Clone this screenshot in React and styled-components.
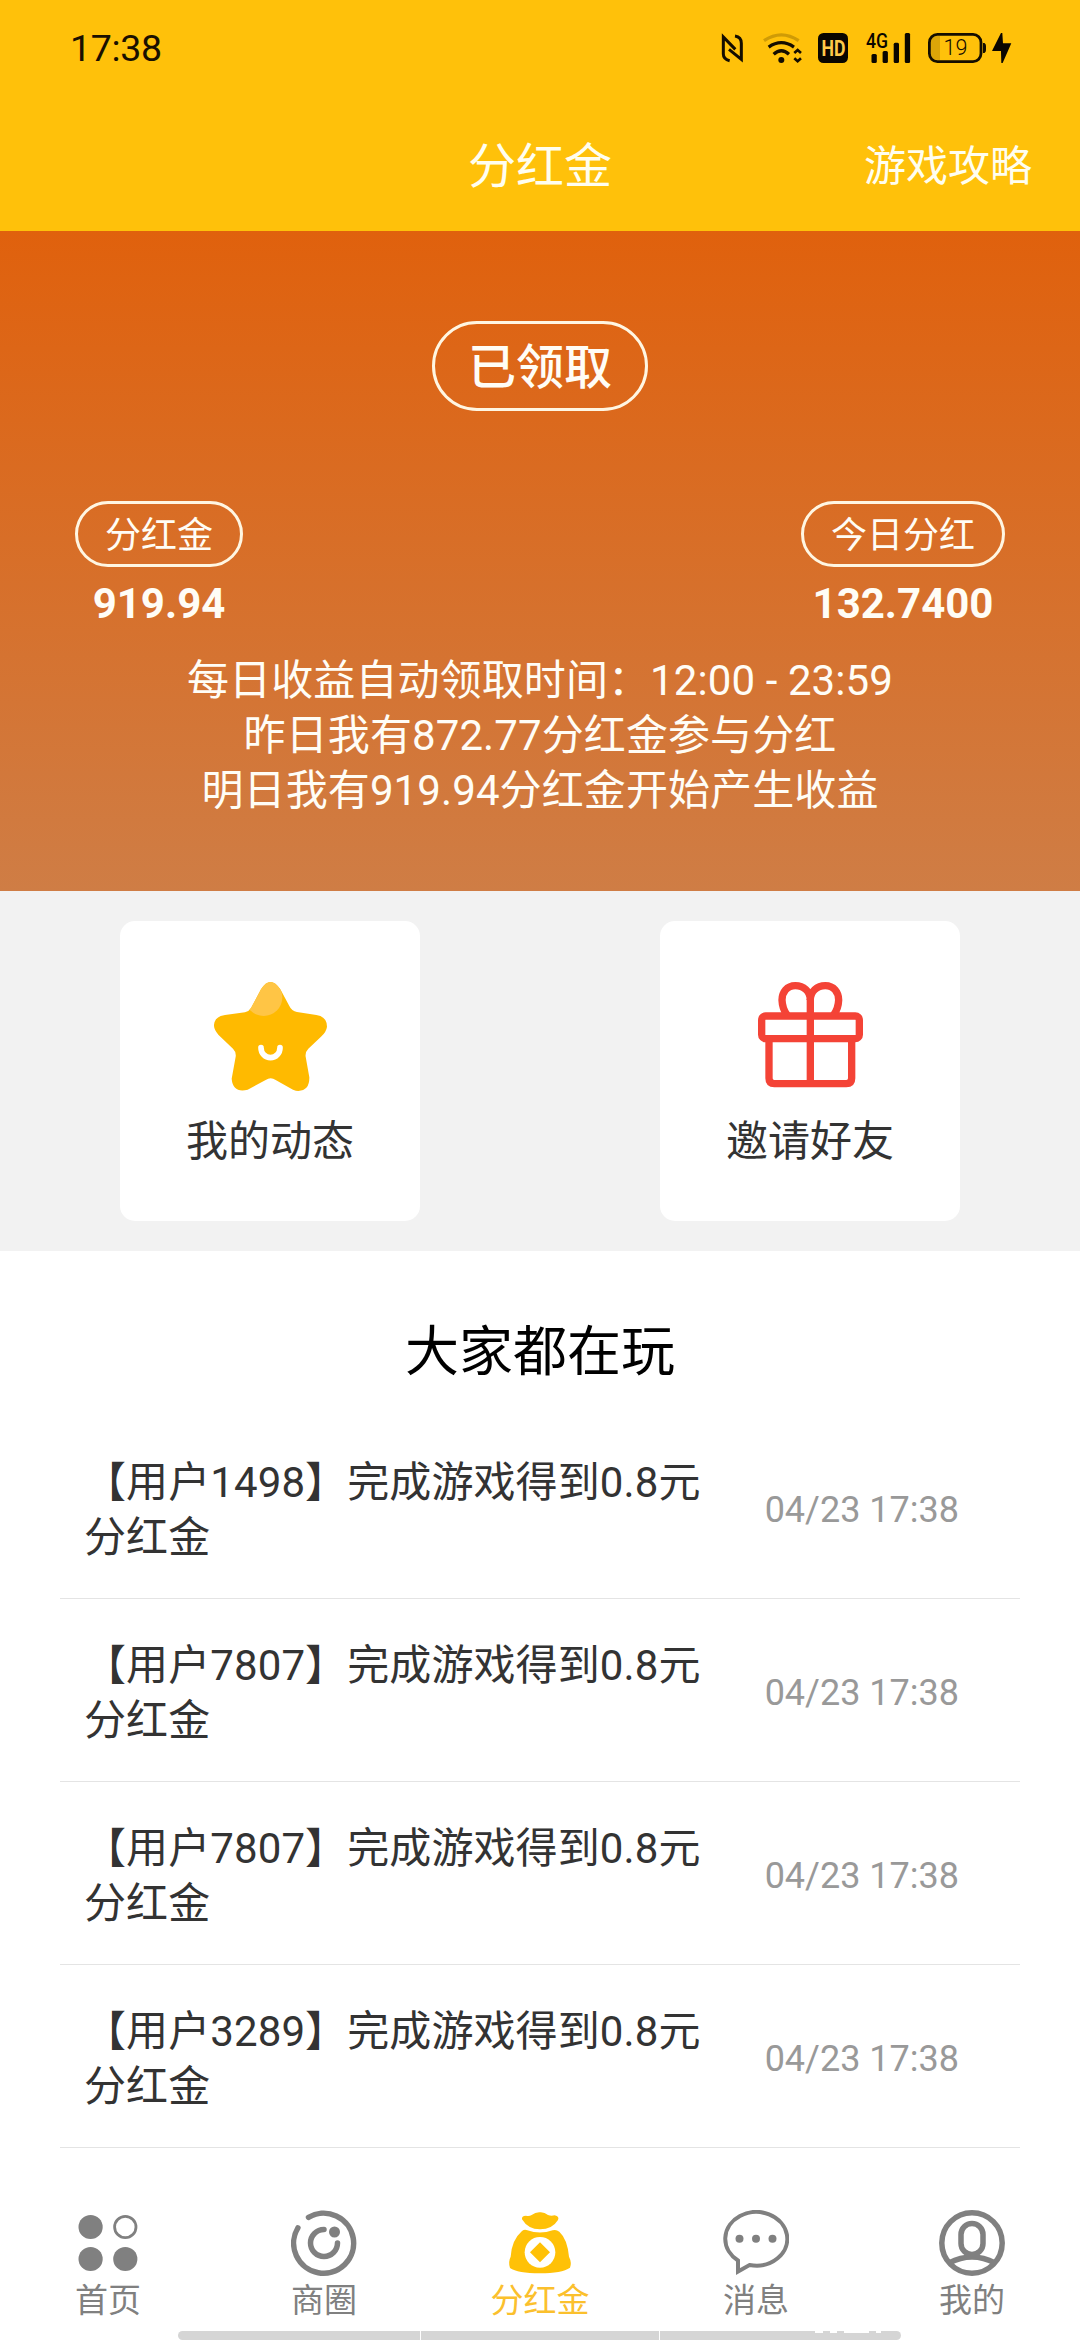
import React from 'react';
import styled, { createGlobalStyle } from 'styled-components';

const GlobalStyle = createGlobalStyle`
  body {
    margin: 0;
    background: #fff;
    font-family: Roboto, 'Noto Sans CJK SC', sans-serif;
  }

  * {
    box-sizing: border-box;
  }

  svg {
    display: block;
    flex: none;
  }
`;

const Page = styled.div`
  display: flex;
  flex-direction: column;
  width: 1080px;
  height: 2340px;
  overflow: hidden;
  background: #fff;
`;

const Header = styled.header`
  height: 231px;
  background: #ffc10a;
`;

const StatusBar = styled.div`
  display: flex;
  align-items: center;
  justify-content: space-between;
  height: 99px;
  padding: 0 69px 3px 70px;
`;

const Clock = styled.span`
  color: #1a1000;
  font-size: 37.5px;
  line-height: 44px;
  letter-spacing: -0.3px;
`;

const StatusIcons = styled.div`
  display: flex;
  align-items: center;
`;

const StatusIcon = styled.svg`
  width: ${(props) => props.$w}px;
  height: 30px;
  margin-left: ${(props) => props.$gap || 0}px;
  overflow: visible;
`;

const NavBar = styled.div`
  display: grid;
  grid-template-columns: 1fr auto 1fr;
  align-items: center;
  height: 132px;
  padding: 3px 48px 0;
  color: #fffef0;
`;

const NavTitle = styled.h1`
  grid-column: 2;
  margin: 0;
  font-size: 48px;
  font-weight: 400;
  line-height: 66px;
`;

const NavLink = styled.span`
  justify-self: end;
  font-size: 42px;
  line-height: 60px;
`;

const Hero = styled.section`
  display: flex;
  flex-direction: column;
  align-items: center;
  height: 660px;
  padding-top: 90px;
  color: #fffdf6;
  background: linear-gradient(#e0610d, #cf7d45);
`;

const Pill = styled.div`
  display: flex;
  align-items: center;
  justify-content: center;
  height: ${(props) => (props.$large ? 90 : 66)}px;
  padding: 4px ${(props) => (props.$large ? 33 : 27)}px 0;
  border: 3px solid #fff6e2;
  border-radius: 45px;
  font-size: ${(props) => (props.$large ? 48 : 36)}px;
  font-weight: ${(props) => (props.$large ? 500 : 400)};
  line-height: 1;
`;

const Stats = styled.div`
  display: flex;
  justify-content: space-between;
  width: 100%;
  margin-top: 90px;
  padding: 0 75px;
`;

const Stat = styled.div`
  display: flex;
  flex-direction: column;
  align-items: center;

  strong {
    margin-top: 9px;
    font-size: 42px;
    font-weight: 700;
    line-height: 55px;
  }
`;

const Notes = styled.div`
  margin-top: 22px;
  font-size: 42px;
  line-height: 55px;
  letter-spacing: 0.1px;
  text-align: center;

  p {
    margin: 0;
  }
`;

const Shortcuts = styled.section`
  display: flex;
  justify-content: space-around;
  height: 360px;
  padding: 30px 0;
  background: #f2f2f2;
`;

const Card = styled.div`
  display: flex;
  flex-direction: column;
  align-items: center;
  width: 300px;
  height: 300px;
  padding-top: 61px;
  border-radius: 15px;
  background: #fff;
  color: #333;
  font-size: 42px;
  line-height: 55px;

  svg {
    margin-bottom: 22px;
  }
`;

const Feed = styled.section`
  flex: 1;
  padding: 0 60px;
`;

const FeedTitle = styled.h2`
  margin: 0;
  padding: 66px 0 27px;
  color: #000;
  font-size: 54px;
  font-weight: 400;
  line-height: 72px;
  text-align: center;
`;

const FeedRow = styled.div`
  display: flex;
  align-items: center;
  justify-content: space-between;
  height: 183px;
  padding: 5px 61px 0 24px;
  border-bottom: 1px solid #e4e4e4;
`;

const FeedText = styled.div`
  width: 640px;
  color: #333;
  font-size: 42px;
  line-height: 55px;
  letter-spacing: 0.1px;
`;

const FeedTime = styled.time`
  color: #999;
  font-size: 36px;
  line-height: 42px;
  white-space: nowrap;
`;

const TabBar = styled.nav`
  display: grid;
  grid-template-columns: repeat(5, 1fr);
  height: 121px;
`;

const Tab = styled.div`
  display: flex;
  flex-direction: column;
  align-items: center;
  color: ${(props) => (props.$active ? '#fbc02d' : '#808080')};
  font-size: 33px;
  line-height: 48px;

  svg {
    width: 66px;
    height: 66px;
    margin-bottom: 1px;
  }
`;

const GestureBar = styled.div`
  display: flex;
  gap: 1px;
  width: 723px;
  height: 9px;
  margin-left: 178px;
  overflow: hidden;
  border-radius: 5px;
`;

const GesturePart = styled.div`
  display: flex;
  justify-content: flex-end;
  gap: 7px;
  width: ${(props) => props.$w}px;
  padding-right: ${(props) => props.$end || 0}px;
  background: #d5d5d5;
`;

const Fleck = styled.i`
  width: ${(props) => props.$w}px;
  height: 2px;
  background: #fff;
`;

function NfcIcon() {
  return (
    <StatusIcon $w={21} viewBox="0 0 63 90" fill="none" stroke="#140d00" strokeWidth="9">
      <path d="M23 83C10 80 4 75 4 63V12L40 49" />
      <path d="M39 9c14 2 19 9 19 22v48L21 49" />
    </StatusIcon>
  );
}

function WifiIcon() {
  return (
    <StatusIcon $w={39.3} $gap={20.5} viewBox="0 0 118 90" fill="none" stroke="#140d00" strokeWidth="10">
      <path d="M3 23Q55-12 107 23" stroke="#cf9b06" />
      <path d="M17 42Q55 16 93 42" />
      <path d="M32 64Q55 43 78 64" />
      <circle cx="55" cy="81" r="9" fill="#140d00" stroke="none" />
      <path d="M94 60l10-9 10 9M94 76l10 9 10-9" strokeWidth="8" />
    </StatusIcon>
  );
}

function HdIcon() {
  return (
    <StatusIcon $w={30} $gap={15.5} viewBox="0 0 30 30">
      <rect width="30" height="30" rx="5.5" fill="#0a0600" />
      <text x="3.4" y="23" fill="#ffc94a" fontSize="22" fontWeight="700" textLength="24" lengthAdjust="spacingAndGlyphs">HD</text>
    </StatusIcon>
  );
}

function SignalIcon() {
  return (
    <StatusIcon $w={44.5} $gap={18} viewBox="0 0 44.5 30" fill="#0a0600">
      <text x="0" y="14.6" fontSize="20" fontWeight="500" textLength="22" lengthAdjust="spacingAndGlyphs">4G</text>
      <rect x="5.5" y="21" width="5.3" height="9" rx="1.5" />
      <rect x="16.6" y="18" width="5.3" height="12" rx="1.5" />
      <rect x="27.7" y="9.7" width="5.3" height="20.3" rx="1.5" />
      <rect x="38.8" y="0" width="5.3" height="30" rx="1.5" />
    </StatusIcon>
  );
}

function BatteryIcon() {
  return (
    <StatusIcon $w={58} $gap={17.5} viewBox="0 0 58 30">
      <path d="M3 8Q4 3 9 3h3v24H9q-5-1-6-5z" fill="#dca508" />
      <rect x="1.4" y="1.4" width="51.6" height="27.2" rx="8" fill="none" stroke="#140d00" strokeWidth="2.8" />
      <path d="M55 10h1.5q1.5 1 1.5 3v4q0 2-1.5 3H55z" fill="#140d00" />
      <text x="15.5" y="22.4" fill="#140d00" fontSize="21.5" fontWeight="300">19</text>
    </StatusIcon>
  );
}

function BoltIcon() {
  return (
    <StatusIcon $w={19.3} $gap={5.5} viewBox="0 0 58 90" fill="#0a0600">
      <path d="M27 0L0 54h27l1 36h4l26-59H33L31 0z" />
    </StatusIcon>
  );
}

const starPath =
  'M480 268Q508 224 538 268L565 318Q572 333 588 336L646 345Q678 350 678 380Q676 396 660 410L622 446Q612 456 614 470L625 532Q626 571 592 573Q585 573 576 569L524 540Q509 530 494 540L440 569Q396 580 392 536L404 470Q406 456 396 446L352 404Q330 380 345 358Q354 347 372 345L432 337Q444 334 450 324Z';

function StarIcon() {
  return (
    <svg width="113" height="110" viewBox="339 246 339 330">
      <clipPath id="star">
        <path d={starPath} />
      </clipPath>
      <path d={starPath} fill="#ffba00" />
      <circle cx="488" cy="292" r="56" fill="#ffc545" clipPath="url(#star)" />
      <path d="M480 443a28.500 30 0 0 0 57 0" fill="none" stroke="#fff" strokeWidth="17" strokeLinecap="round" />
    </svg>
  );
}

function GiftIcon() {
  return (
    <svg width="105" height="110" viewBox="353 246 315 330" fill="none" stroke="#f44336" strokeWidth="22">
      <rect x="364" y="348" width="293" height="68" rx="12" />
      <path d="M386 416v119q0 16 16 16h216q16 0 16-16V416M510 551V298" />
      <path d="M510 300C510 274 490 257 465 257S425 277 425 300Q426 326 440 345" />
      <path d="M510 300C510 274 530 257 555 257S595 277 595 300Q594 326 580 345" />
    </svg>
  );
}

function HomeIcon() {
  return (
    <svg viewBox="0 0 66 66" fill="#808080">
      <circle cx="15.600" cy="17" r="12.100" />
      <circle cx="50.300" cy="17" r="10.700" fill="none" stroke="#808080" strokeWidth="2.800" />
      <circle cx="15.600" cy="49" r="12.100" />
      <circle cx="50.300" cy="49" r="12.100" />
    </svg>
  );
}

function CircleIcon() {
  return (
    <svg viewBox="0 0 66 66" fill="none" stroke="#808080" strokeWidth="5.500" strokeLinecap="round">
      <path d="M17.500 7.300A30 30 0 1 1 6.900 17.800" />
      <path d="M33 19.500A13.500 13.500 0 1 0 46.500 33" />
      <circle cx="43.500" cy="22" r="5.500" fill="#808080" stroke="none" />
    </svg>
  );
}

function BagIcon() {
  return (
    <svg viewBox="81 60 198 198" fill="#ffc107">
      <path d="M126 88Q124 78 138 77Q148 79 155 75Q167 66 180 67Q193 66 204 75Q213 79 224 76Q239 79 234 90Q217 118 180 118Q144 118 126 88Z" />
      <path d="M126 123Q134 117 142 121Q180 134 218 121Q228 117 238 125Q262 147 267 200Q276 218 270 233Q245 250 180 250Q113 250 90 234Q84 215 92 200Q95 150 126 123Z" />
      <circle cx="180" cy="187" r="46" fill="#fff" />
      <path d="M180 157l30 30-30 30-30-30z" />
    </svg>
  );
}

function MessageIcon() {
  return (
    <svg viewBox="0 0 66 66" fill="none" stroke="#808080" strokeWidth="4">
      <path d="M15 61.500V50.500A31 26.800 0 1 1 26.500 55Z" />
      <g fill="#808080" stroke="none">
        <circle cx="16.500" cy="28.700" r="4" />
        <circle cx="33" cy="28.700" r="4" />
        <circle cx="49.500" cy="28.700" r="4" />
      </g>
    </svg>
  );
}

function MeIcon() {
  return (
    <svg viewBox="0 0 66 66" fill="none" stroke="#808080" strokeWidth="5.500">
      <circle cx="33" cy="33" r="30.200" />
      <rect x="22" y="13.500" width="22" height="31" rx="11" />
      <path d="M10 53Q33 41 56 53" />
    </svg>
  );
}

const rows = [
  { user: '1498', time: '04/23 17:38' },
  { user: '7807', time: '04/23 17:38' },
  { user: '7807', time: '04/23 17:38' },
  { user: '3289', time: '04/23 17:38' },
];

const tabs = [
  { label: '首页', Icon: HomeIcon },
  { label: '商圈', Icon: CircleIcon },
  { label: '分红金', Icon: BagIcon, active: true },
  { label: '消息', Icon: MessageIcon },
  { label: '我的', Icon: MeIcon },
];

function App() {
  return (
    <Page>
      <GlobalStyle />
      <Header>
        <StatusBar>
          <Clock>17:38</Clock>
          <StatusIcons>
            <NfcIcon />
            <WifiIcon />
            <HdIcon />
            <SignalIcon />
            <BatteryIcon />
            <BoltIcon />
          </StatusIcons>
        </StatusBar>
        <NavBar>
          <NavTitle>分红金</NavTitle>
          <NavLink>游戏攻略</NavLink>
        </NavBar>
      </Header>

      <Hero>
        <Pill $large>已领取</Pill>
        <Stats>
          <Stat>
            <Pill>分红金</Pill>
            <strong>919.94</strong>
          </Stat>
          <Stat>
            <Pill>今日分红</Pill>
            <strong>132.7400</strong>
          </Stat>
        </Stats>
        <Notes>
          <p>每日收益自动领取时间：12:00 - 23:59</p>
          <p>昨日我有872.77分红金参与分红</p>
          <p>明日我有919.94分红金开始产生收益</p>
        </Notes>
      </Hero>

      <Shortcuts>
        <Card>
          <StarIcon />
          我的动态
        </Card>
        <Card>
          <GiftIcon />
          邀请好友
        </Card>
      </Shortcuts>

      <Feed>
        <FeedTitle>大家都在玩</FeedTitle>
        {rows.map((row, i) => (
          <FeedRow key={i}>
            <FeedText>{`【用户${row.user}】完成游戏得到0.8元分红金`}</FeedText>
            <FeedTime>{row.time}</FeedTime>
          </FeedRow>
        ))}
      </Feed>

      <TabBar>
        {tabs.map(({ label, Icon, active }) => (
          <Tab key={label} $active={active}>
            <Icon />
            {label}
          </Tab>
        ))}
      </TabBar>
      <GestureBar>
        <GesturePart $w={242} />
        <GesturePart $w={238} />
        <GesturePart $w={241} $end={20}>
          <Fleck $w={8} />
          <Fleck $w={7} />
          <Fleck $w={25} />
          <Fleck $w={5} />
        </GesturePart>
      </GestureBar>
    </Page>
  );
}

export default App;
